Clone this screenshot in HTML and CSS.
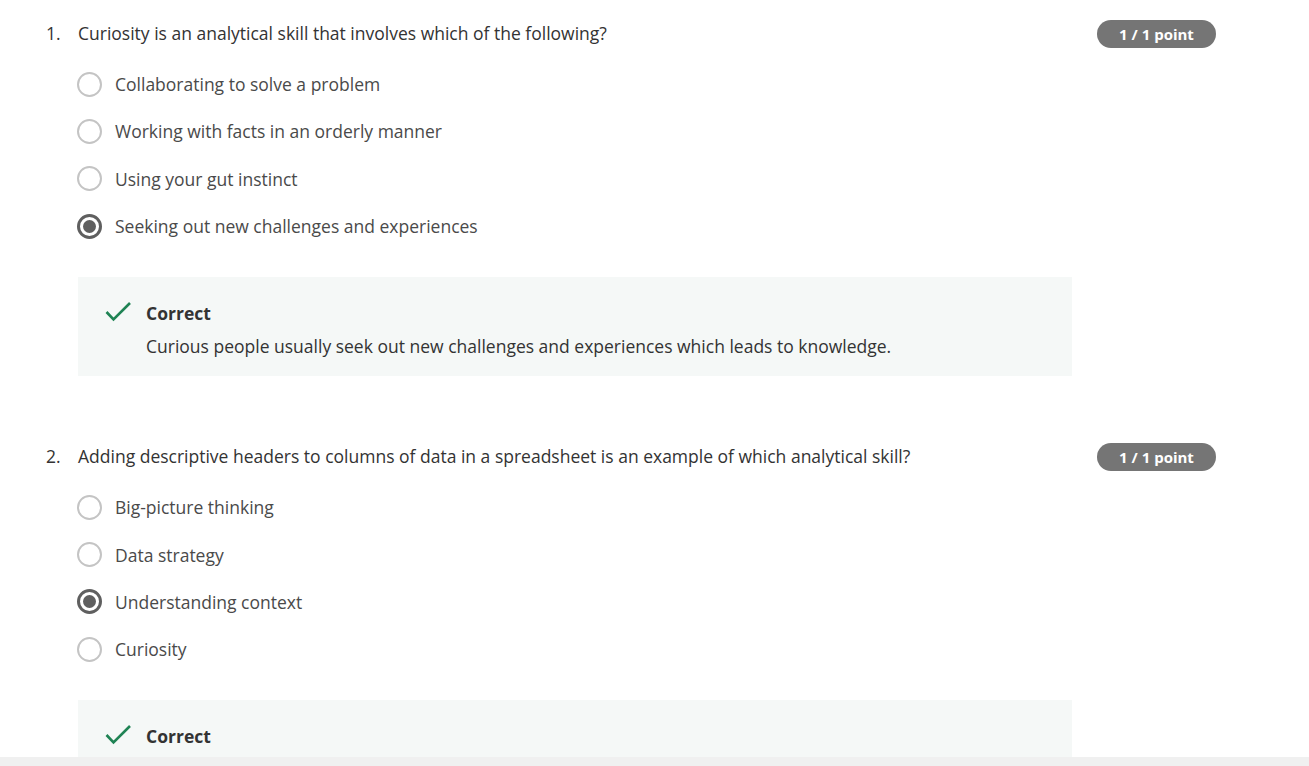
FILE: index.html
```html
<!DOCTYPE html>
<html lang="en">
<head>
<meta charset="utf-8">
<title>Quiz</title>
<link rel="stylesheet" href="styles.css">
</head>
<body>
<div class="page">
  <main class="content">
    <section class="question">
      <div class="q-head">
        <span class="q-num">1.</span>
        <p class="q-text">Curiosity is an analytical skill that involves which of the following?</p>
        <span class="badge">1 / 1 point</span>
      </div>
      <ul class="options">
        <li class="option"><span class="radio"></span><span>Collaborating to solve a problem</span></li>
        <li class="option"><span class="radio"></span><span>Working with facts in an orderly manner</span></li>
        <li class="option"><span class="radio"></span><span>Using your gut instinct</span></li>
        <li class="option"><span class="radio checked"></span><span>Seeking out new challenges and experiences</span></li>
      </ul>
      <div class="feedback">
        <svg class="check" width="28" height="22" viewBox="0 0 28 22"><path d="M2.5 11 L9.5 18.5 L26 2" fill="none" stroke="#1f8354" stroke-width="2.6"/></svg>
        <div class="fb-body">
          <div class="fb-title">Correct</div>
          <div class="fb-text">Curious people usually seek out new challenges and experiences which leads to knowledge.</div>
        </div>
      </div>
    </section>
    <section class="question">
      <div class="q-head">
        <span class="q-num">2.</span>
        <p class="q-text">Adding descriptive headers to columns of data in a spreadsheet is an example of which analytical skill?</p>
        <span class="badge">1 / 1 point</span>
      </div>
      <ul class="options">
        <li class="option"><span class="radio"></span><span>Big-picture thinking</span></li>
        <li class="option"><span class="radio"></span><span>Data strategy</span></li>
        <li class="option"><span class="radio checked"></span><span>Understanding context</span></li>
        <li class="option"><span class="radio"></span><span>Curiosity</span></li>
      </ul>
      <div class="feedback">
        <svg class="check" width="28" height="22" viewBox="0 0 28 22"><path d="M2.5 11 L9.5 18.5 L26 2" fill="none" stroke="#1f8354" stroke-width="2.6"/></svg>
        <div class="fb-body">
          <div class="fb-title">Correct</div>
        </div>
      </div>
    </section>
  </main>
  <div class="bottom-bar"></div>
</div>
</body>
</html>
```
FILE: styles.css
```css
* { box-sizing: border-box; }
html, body { margin: 0; padding: 0; }
body {
  font-family: "Open Sans", "Noto Sans", sans-serif;
  background: #ffffff;
  color: #333333;
  overflow: hidden;
}
.page {
  height: 766px;
  display: flex;
  flex-direction: column;
}
.content {
  flex: 1;
  overflow: hidden;
  padding: 20px 93px 0 46px;
}
.question {
  margin-bottom: 67px;
}
.q-head {
  display: flex;
  align-items: flex-start;
  height: 28px;
}
.q-num {
  width: 32px;
  font-size: 17.5px;
  line-height: 26px;
  color: #333;
}
.q-text {
  flex: 1;
  margin: 0;
  font-size: 17.5px;
  line-height: 26px;
  color: #333;
}
.badge {
  width: 119px;
  height: 28px;
  border-radius: 14px;
  background: #757575;
  color: #fff;
  font-weight: 700;
  font-size: 15px;
  line-height: 28px;
  text-align: center;
}
.options {
  list-style: none;
  margin: 24px 0 0 31px;
  padding: 0;
  display: flex;
  flex-direction: column;
  gap: 23.4px;
}
.option {
  display: flex;
  align-items: center;
  height: 24px;
  font-size: 17.5px;
  color: #4a4a4a;
}
.radio {
  width: 25px;
  height: 25px;
  border-radius: 50%;
  border: 2px solid #c4c4c4;
  margin-right: 13px;
  flex: none;
  position: relative;
}
.radio.checked {
  border: 3px solid #5f5f5f;
}
.radio.checked::after {
  content: "";
  position: absolute;
  left: 3px;
  top: 3px;
  width: 13px;
  height: 13px;
  border-radius: 50%;
  background: #5f5f5f;
}
.feedback {
  margin: 39px 0 0 32px;
  width: 994px;
  background: #f5f8f7;
  display: flex;
  align-items: flex-start;
  padding: 24px 20px 18px 26px;
  gap: 14px;
}
.check { flex: none; margin-top: 0; }
.fb-title {
  font-weight: 700;
  font-size: 17.5px;
  line-height: 24px;
  color: #333;
}
.fb-text {
  margin-top: 9px;
  font-size: 17.5px;
  line-height: 24px;
  color: #333;
}
.bottom-bar {
  height: 9px;
  background: #f0f0f0;
  flex: none;
}
```
